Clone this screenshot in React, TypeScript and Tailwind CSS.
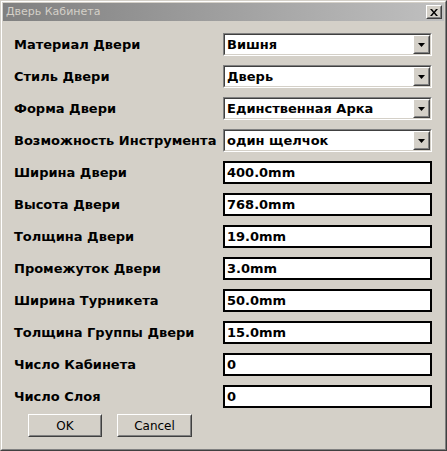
import React from "react";

const FONT = { fontFamily: '"DejaVu Sans", "Liberation Sans", sans-serif' };

type Field = { label: string; value: string; combo?: boolean };

const fields: Field[] = [
  { label: "Материал Двери", value: "Вишня", combo: true },
  { label: "Стиль Двери", value: "Дверь", combo: true },
  { label: "Форма Двери", value: "Единственная Арка", combo: true },
  { label: "Возможность Инструмента", value: "один щелчок", combo: true },
  { label: "Ширина Двери", value: "400.0mm" },
  { label: "Высота Двери", value: "768.0mm" },
  { label: "Толщина Двери", value: "19.0mm" },
  { label: "Промежуток Двери", value: "3.0mm" },
  { label: "Ширина Турникета", value: "50.0mm" },
  { label: "Толщина Группы Двери", value: "15.0mm" },
  { label: "Число Кабинета", value: "0" },
  { label: "Число Слоя", value: "0" },
];

function Raised({ className, children }: { className?: string; children?: React.ReactNode }) {
  return (
    <div className={`border border-t-white border-l-white border-r-[#404040] border-b-[#404040] bg-[#d4d0c8] ${className ?? ""}`}>
      <div className="flex h-full w-full items-center justify-center border border-t-[#d4d0c8] border-l-[#d4d0c8] border-r-[#808080] border-b-[#808080]">
        {children}
      </div>
    </div>
  );
}

function Combo({ value }: { value: string }) {
  return (
    <div className="h-[23px] border border-t-[#808080] border-l-[#808080] border-r-white border-b-white">
      <div className="flex h-full items-center border border-t-[#404040] border-l-[#404040] border-r-[#d4d0c8] border-b-[#d4d0c8] bg-white">
        <span className="flex-1 pl-[2px] text-[13px] font-bold text-black">{value}</span>
        <Raised className="h-[19px] w-[17px]">
          <svg width="7" height="4" viewBox="0 0 7 4">
            <path d="M0 0h7L3.5 4z" fill="#000" />
          </svg>
        </Raised>
      </div>
    </div>
  );
}

function TextBox({ value }: { value: string }) {
  return (
    <div className="flex h-[23px] items-center border-2 border-black bg-white pl-[2px]">
      <span className="text-[13px] font-bold text-black">{value}</span>
    </div>
  );
}

export default function App() {
  return (
    <div className="h-[451px] w-[447px] bg-[#d4d0c8]" style={FONT}>
      <div className="h-full w-full border border-t-[#d4d0c8] border-l-[#d4d0c8] border-r-[#404040] border-b-[#404040]">
        <div className="flex h-full w-full flex-col border border-t-white border-l-white border-r-[#808080] border-b-[#808080] p-px">
          {/* title bar */}
          <div className="flex h-[18px] items-center justify-between bg-gradient-to-r from-[#808080] to-[#c0c0c0] pl-[3px] pr-[2px]">
            <span className="text-[11px] text-[#d4d0c8]">Дверь Кабинета</span>
            <Raised className="h-[14px] w-[16px]">
              <svg width="8" height="7" viewBox="0 0 8 7">
                <path d="M0 0h2l2 2.5L6 0h2L5 3.5 8 7H6L4 4.5 2 7H0l3-3.5z" fill="#000" />
              </svg>
            </Raised>
          </div>

          <div className="grid grid-cols-[209px_209px] gap-y-[9px] pl-[11px] pt-[12px]">
            {fields.map((f, i) => (
              <React.Fragment key={i}>
                <div className="flex h-[23px] items-center whitespace-nowrap text-[13px] font-bold text-black">
                  {f.label}
                </div>
                {f.combo ? <Combo value={f.value} /> : <TextBox value={f.value} />}
              </React.Fragment>
            ))}
          </div>

          <div className="flex gap-[15px] pl-[25px] pt-[6px]">
            <Raised className="h-[23px] w-[74px]">
              <span className="text-[12px] text-black">OK</span>
            </Raised>
            <Raised className="h-[23px] w-[75px]">
              <span className="text-[12px] text-black">Cancel</span>
            </Raised>
          </div>
        </div>
      </div>
    </div>
  );
}
